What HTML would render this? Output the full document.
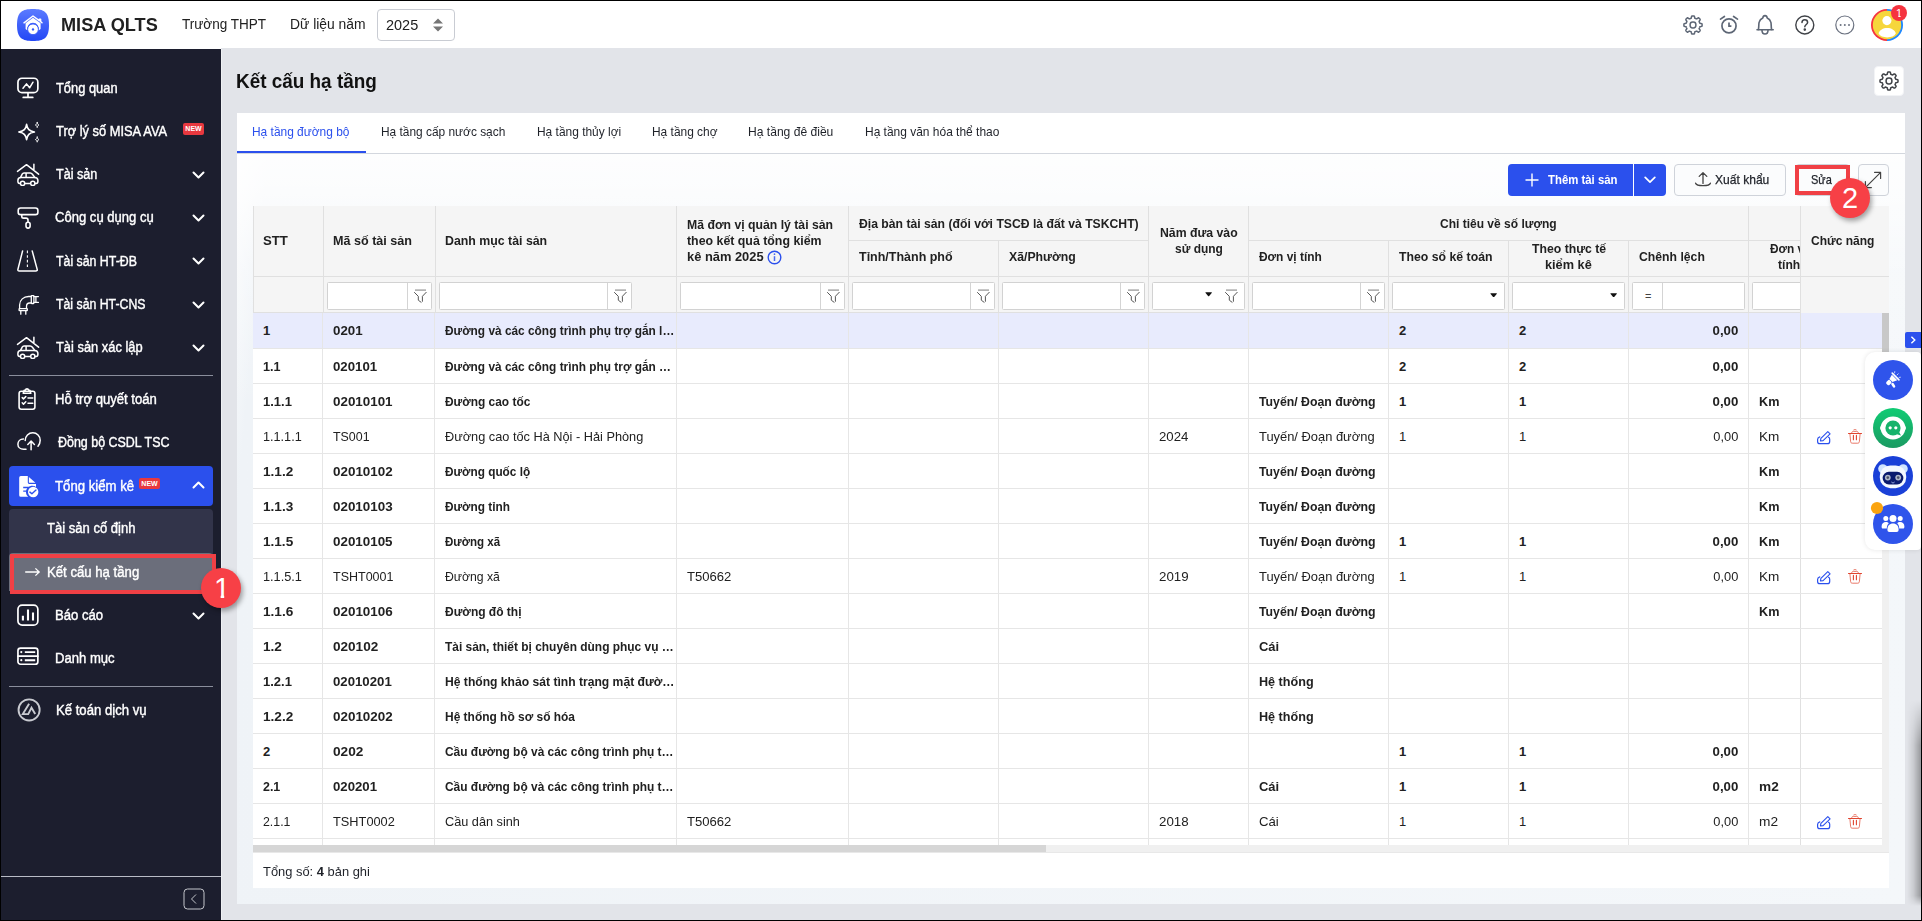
<!DOCTYPE html>
<html lang="vi">
<head>
<meta charset="utf-8">
<title>Kết cấu hạ tầng</title>
<style>
*{box-sizing:border-box;margin:0;padding:0}
html,body{width:1922px;height:921px;overflow:hidden;background:#000}
body{font-family:"Liberation Sans",sans-serif;font-size:13px;color:#212121;position:relative}
.a{position:absolute}
.x{position:absolute;white-space:nowrap;transform-origin:0 50%}
.s14{font-size:14px;line-height:20px;color:#fff;-webkit-text-stroke:0.4px #fff}
.h14{font-size:14px;line-height:20px;color:#212121}
.tab{font-size:13px;line-height:18px;color:#1f2229}
.th{font-weight:bold;font-size:13px;line-height:16px;color:#212121}
.td{font-size:13px;line-height:17px;color:#212121}
.tb{font-size:13px;line-height:17px;color:#212121;font-weight:bold}
.new{position:absolute;background:#e8383f;color:#fff;font-size:7px;font-weight:bold;border-radius:2px;text-align:center}
.mi{position:absolute;left:9px;width:204px;height:40px;border-radius:4px}
.btnp{position:absolute;background:#2b50ed}
.btns{position:absolute;background:#fbfcfd;border:1px solid #cfd3da;border-radius:4px}
.fi{position:absolute;background:#fff;border:1px solid #d2d2d2;border-radius:1.5px}
</style>
</head>
<body>
<div class="a" style="left:1px;top:1px;width:1920px;height:919px;background:#e2e4e9;"></div>
<header>
<div class="a" style="left:1px;top:1px;width:1920px;height:47px;background:#fff;"></div>
<div class="a" style="left:1px;top:48px;width:220px;height:1px;background:#fff;"></div>
<svg class="a" style="left:17px;top:9px;width:32px;height:32px" viewBox="0 0 32 32">
<defs><linearGradient id="lg" x1="0" y1="0" x2="0" y2="1"><stop offset="0" stop-color="#5b7bff"/><stop offset="1" stop-color="#2347f5"/></linearGradient></defs>
<path d="M16 0C27 0 32 3 32 16C32 29 27 32 16 32C5 32 0 29 0 16C0 3 5 0 16 0Z" fill="url(#lg)"/>
<path d="M7 13.8L16 7L22.3 11.6V10.2H23.6V12.6L25 13.8" fill="none" stroke="#fff" stroke-width="1.5" stroke-linejoin="round" stroke-linecap="round"/>
<path d="M8.6 14.2L16 8.8L23.6 14.2V20L21.5 21.5A5.8 5.8 0 1 0 10.5 21.5L8.6 20Z" fill="#fff"/>
<circle cx="16" cy="20.3" r="5.4" fill="#fff" stroke="#3d5ffa" stroke-width="1"/>
<path d="M16 18.7L17.4 20.4L16 22.1L14.6 20.4Z" fill="#3558f8"/>
</svg>

<div class="x " id="brand" style="left:60.56px;top:13px;transform:scaleX(1.0079);font-size:18px;font-weight:bold;color:#212121;line-height:24px">MISA QLTS</div>
<div class="x h14" id="h_truong" style="left:181.69px;top:14px;transform:scaleX(0.9670);">Trường THPT</div>
<div class="x h14" id="h_dulieu" style="left:289.79px;top:14px;transform:scaleX(0.9908);">Dữ liệu năm</div>
<div class="a" style="left:377px;top:9px;width:78px;height:32px;border:1px solid #c9ccd3;border-radius:4px;background:#fff"></div>
<div class="x h14" id="h_year" style="left:385.68px;top:15px;transform:scaleX(1.0340);">2025</div>
<svg class="a" style="left:432px;top:17px;width:12px;height:16px" viewBox="0 0 12 16" ><path d="M1 6.4L6 1.4L11 6.4Z M1 9.6L6 14.6L11 9.6Z" fill="#757575"/></svg>
<svg class="a" style="left:1681px;top:13px;width:24px;height:24px" viewBox="0 0 24 24" fill="none" stroke="#5d6675" stroke-width="1.5" stroke-linejoin="round"><path d="M21.10 12.00L21.09 12.36L21.07 12.71L21.04 13.07L20.71 13.38L19.90 13.57L19.08 13.70L18.74 13.90L18.66 14.16L18.57 14.42L18.47 14.68L18.36 14.93L18.24 15.18L18.11 15.42L18.21 15.80L18.69 16.47L19.14 17.19L19.15 17.63L18.92 17.91L18.68 18.18L18.43 18.43L18.18 18.68L17.91 18.92L17.63 19.15L17.19 19.14L16.47 18.69L15.80 18.21L15.42 18.11L15.18 18.24L14.93 18.36L14.68 18.47L14.42 18.57L14.16 18.66L13.90 18.74L13.70 19.08L13.57 19.90L13.38 20.71L13.07 21.04L12.71 21.07L12.36 21.09L12.00 21.10L11.64 21.09L11.29 21.07L10.93 21.04L10.62 20.71L10.43 19.90L10.30 19.08L10.10 18.74L9.84 18.66L9.58 18.57L9.32 18.47L9.07 18.36L8.82 18.24L8.58 18.11L8.20 18.21L7.53 18.69L6.81 19.14L6.37 19.15L6.09 18.92L5.82 18.68L5.57 18.43L5.32 18.18L5.08 17.91L4.85 17.63L4.86 17.19L5.31 16.47L5.79 15.80L5.89 15.42L5.76 15.18L5.64 14.93L5.53 14.68L5.43 14.42L5.34 14.16L5.26 13.90L4.92 13.70L4.10 13.57L3.29 13.38L2.96 13.07L2.93 12.71L2.91 12.36L2.90 12.00L2.91 11.64L2.93 11.29L2.96 10.93L3.29 10.62L4.10 10.43L4.92 10.30L5.26 10.10L5.34 9.84L5.43 9.58L5.53 9.32L5.64 9.07L5.76 8.82L5.89 8.58L5.79 8.20L5.31 7.53L4.86 6.81L4.85 6.37L5.08 6.09L5.32 5.82L5.57 5.57L5.82 5.32L6.09 5.08L6.37 4.85L6.81 4.86L7.53 5.31L8.20 5.79L8.58 5.89L8.82 5.76L9.07 5.64L9.32 5.53L9.58 5.43L9.84 5.34L10.10 5.26L10.30 4.92L10.43 4.10L10.62 3.29L10.93 2.96L11.29 2.93L11.64 2.91L12.00 2.90L12.36 2.91L12.71 2.93L13.07 2.96L13.38 3.29L13.57 4.10L13.70 4.92L13.90 5.26L14.16 5.34L14.42 5.43L14.68 5.53L14.93 5.64L15.18 5.76L15.42 5.89L15.80 5.79L16.47 5.31L17.19 4.86L17.63 4.85L17.91 5.08L18.18 5.32L18.43 5.57L18.68 5.82L18.92 6.09L19.15 6.37L19.14 6.81L18.69 7.53L18.21 8.20L18.11 8.58L18.24 8.82L18.36 9.07L18.47 9.32L18.57 9.58L18.66 9.84L18.74 10.10L19.08 10.30L19.90 10.43L20.71 10.62L21.04 10.93L21.07 11.29L21.09 11.64Z"/><rect x="9.1" y="9.1" width="5.8" height="5.8" rx="2.6"/></svg>
<svg class="a" style="left:1717px;top:13px;width:24px;height:24px" viewBox="0 0 24 24" fill="none" stroke="#5d6675" stroke-width="1.7" stroke-linecap="round" stroke-linejoin="round"><circle cx="12" cy="12.9" r="7.05"/><path d="M12 9.5V13.2H14.4" stroke-linecap="butt" stroke-linejoin="miter"/><path d="M3.5 6.1L7.4 3.5M16.6 3.5L20.5 6.1"/></svg>
<svg class="a" style="left:1753px;top:13px;width:24px;height:24px" viewBox="0 0 24 24" fill="none" stroke="#5d6675" stroke-width="1.6" stroke-linecap="round" stroke-linejoin="round"><path d="M4 16.7H20.2"/><path d="M5.4 16.5C6.1 13.4 5.5 11 6.2 9C6.8 7 8 5.8 9.8 5C10 3.4 10.8 2.6 12 2.6C13.2 2.6 14 3.4 14.2 5C16 5.8 17.2 7 17.8 9C18.5 11 17.9 13.4 18.6 16.5"/><path d="M9 17.2C9 19.7 10 21 12 21C14 21 15 19.7 15 17.2"/></svg>
<svg class="a" style="left:1793px;top:13px;width:24px;height:24px" viewBox="0 0 24 24" fill="none" stroke="#3f4247" stroke-width="1.4" stroke-linecap="round" stroke-linejoin="round"><circle cx="11.8" cy="12" r="9"/><path d="M9 9.6C9 7.8 10.2 6.8 11.8 6.8C13.4 6.8 14.6 7.8 14.6 9.4C14.6 11.4 11.8 11.6 11.8 13.8" stroke-width="1.5"/><circle cx="11.8" cy="16.6" r="0.6" fill="#3f4247"/></svg>
<svg class="a" style="left:1833px;top:13px;width:24px;height:24px" viewBox="0 0 24 24" fill="none" stroke="#6b7280" stroke-width="1.2"><circle cx="11.8" cy="12" r="9"/><g fill="#6b7280" stroke="none"><circle cx="7.6" cy="12" r="1"/><circle cx="11.8" cy="12" r="1"/><circle cx="16" cy="12" r="1"/></g></svg>
<svg class="a" style="left:1871px;top:4px;width:40px;height:40px" viewBox="0 0 40 40"><defs><clipPath id="avc"><path d="M0 0H40V12.05H29.7V14H27.2V12.05H0Z"/></clipPath></defs>
<path d="M16 5A16 16 0 0 0 16 37Z" fill="#f5333f"/><path d="M16 5A16 16 0 0 1 16 37Z" fill="#1e88ff"/>
<circle cx="16" cy="21" r="14.2" fill="#f6d63c"/>
<g fill="#fff"><circle cx="15.9" cy="16.6" r="4.55"/><path d="M7.6 29.6C8.6 26 12 24.1 16.2 24.1C20.4 24.1 23.8 26 24.8 29.6C23.4 32.2 20.2 33.4 16.2 33.4C12.2 33.4 9 32.2 7.6 29.6Z"/></g>
<circle cx="28" cy="9" r="8" fill="#f5333f"/>
<text x="28" y="13" font-family="Liberation Sans, sans-serif" font-size="11" fill="#fff" text-anchor="middle" clip-path="url(#avc)">1</text>
</svg>

</header>
<nav>
<div class="a" style="left:1px;top:49px;width:220px;height:871px;background:#1c1e2e;"></div>
<div class="a" style="left:221px;top:49px;width:1px;height:871px;background:#eef0f3;"></div>
<div class="a" style="left:9px;top:466px;width:204px;height:40px;background:#2b50ed;border-radius:4px"></div>
<div class="a" style="left:9px;top:509px;width:204px;height:82px;background:#32344a;border-radius:4px"></div>
<div class="a" style="left:9px;top:553px;width:204px;height:38px;background:#6b6e7b;border-radius:4px 4px 0 0"></div>
<svg class="a" style="left:16px;top:76px;width:24px;height:24px" viewBox="0 0 24 24" fill="none" stroke="#fff" stroke-linecap="round" stroke-linejoin="round" stroke-width="1.7"><rect x="1.95" y="2.25" width="19.9" height="14.4" rx="4"/><path d="M12 16.8V21.2M7.2 21.4H16.8"/><path d="M7 12.3L10.5 7.9L13.6 11.8L17 6.2" stroke-width="1.5"/></svg>
<svg class="a" style="left:16px;top:119px;width:24px;height:24px" viewBox="0 0 24 24" fill="none" stroke="#fff" stroke-linecap="round" stroke-linejoin="round" stroke-width="1.6"><path d="M10.6 5.3C11.4 10.2 13.2 12.1 18.4 13C13.2 13.9 11.4 15.8 10.6 20.7C9.8 15.8 8 13.9 2.8 13C8 12.1 9.8 10.2 10.6 5.3Z"/><path d="M21.2 3.4C21.5 5 21.9 5.6 23 6C21.9 6.4 21.5 7 21.2 8.6C20.9 7 20.5 6.4 19.4 6C20.5 5.6 20.9 5 21.2 3.4Z" stroke-width="0.9"/><path d="M21.2 18C21.5 19.6 21.9 20.2 23 20.6C21.9 21 21.5 21.6 21.2 23.2C20.9 21.6 20.5 21 19.4 20.6C20.5 20.2 20.9 19.6 21.2 18Z" stroke-width="0.9"/></svg>
<svg class="a" style="left:16px;top:162px;width:24px;height:24px" viewBox="0 0 24 24" fill="none" stroke="#fff" stroke-linecap="round" stroke-linejoin="round" stroke-width="1.5"><path d="M1.5 9.4L10.5 2.7L22.6 12.2M17.9 2.2V8.6"/><path d="M4.6 15.4L6.2 12.2C6.6 11.4 7.2 11 8 11H14.2C15.2 11 15.8 11.4 16.4 12.2L18.8 15.4M10.1 11.2V15.2"/><path d="M4.2 21.4H3.6C2.6 21.4 1.9 20.7 1.9 19.6V18.4C1.9 16.6 3 15.5 4.8 15.5H18.6C20.6 15.5 21.9 16.8 21.9 18.6V19.6C21.9 20.7 21.2 21.4 20.2 21.4H19.2M9 21.4H14.4"/><circle cx="6.6" cy="21.4" r="2.1"/><circle cx="16.8" cy="21.4" r="2.1"/></svg>
<svg class="a" style="left:16px;top:205px;width:24px;height:24px" viewBox="0 0 24 24" fill="none" stroke="#fff" stroke-linecap="round" stroke-linejoin="round" stroke-width="1.6"><rect x="2.2" y="3" width="19.7" height="6.6" rx="2.4"/><path d="M5.8 9.8V11.4C5.8 12.6 6.4 13.1 7.6 13.1H10C11.4 13.1 12 13.7 12 15V17"/><rect x="10" y="17.3" width="4.1" height="5.8" rx="2"/></svg>
<svg class="a" style="left:16px;top:248px;width:24px;height:24px" viewBox="0 0 24 24" fill="none" stroke="#fff" stroke-linecap="round" stroke-linejoin="round" stroke-width="1.5"><path d="M6.6 2.9L1.9 21.4Q1.6 23 3.2 23H19.8Q21.6 23 21.2 21.4L16.2 2.9"/><path d="M11.4 2.6V21" stroke-dasharray="2.6 2" stroke-width="1.1" stroke-linecap="butt"/></svg>
<svg class="a" style="left:16px;top:292px;width:24px;height:24px" viewBox="0 0 24 24" fill="none" stroke="#fff" stroke-linecap="round" stroke-linejoin="round" stroke-width="1.3"><path d="M3.6 16.6V13C3.6 8 7.6 4.5 12.6 4.5H15.2M10.5 16.6V14.4C10.5 12.2 11.6 11 13.6 11H15.2"/><rect x="15.3" y="3.7" width="2.6" height="7.8" rx="0.4"/><path d="M17.9 4.6H22.4M17.9 10.4H22.4M19.9 4.6V10.4"/><rect x="3.1" y="16.7" width="8.2" height="1.9" rx="0.4"/><path d="M4.8 18.6V22.2M9.8 18.6V22.2"/></svg>
<svg class="a" style="left:16px;top:335px;width:24px;height:24px" viewBox="0 0 24 24" fill="none" stroke="#fff" stroke-linecap="round" stroke-linejoin="round" stroke-width="1.5"><path d="M1.5 9.4L10.5 2.7L22.6 12.2M17.9 2.2V8.6"/><path d="M4.6 15.4L6.2 12.2C6.6 11.4 7.2 11 8 11H14.2C15.2 11 15.8 11.4 16.4 12.2L18.8 15.4M10.1 11.2V15.2"/><path d="M4.2 21.4H3.6C2.6 21.4 1.9 20.7 1.9 19.6V18.4C1.9 16.6 3 15.5 4.8 15.5H18.6C20.6 15.5 21.9 16.8 21.9 18.6V19.6C21.9 20.7 21.2 21.4 20.2 21.4H19.2M9 21.4H14.4"/><circle cx="6.6" cy="21.4" r="2.1"/><circle cx="16.8" cy="21.4" r="2.1"/></svg>
<svg class="a" style="left:16px;top:387px;width:24px;height:24px" viewBox="0 0 24 24" fill="none" stroke="#fff" stroke-linecap="round" stroke-linejoin="round" stroke-width="1.6"><rect x="3.1" y="4.2" width="15.8" height="18" rx="2.2"/><path d="M7.2 6.2L8.2 3.2H9.4C9.8 1.4 12.2 1.4 12.6 3.2H13.8L14.8 6.2Z"/><path d="M6.2 10.6L7.5 11.9L9.8 9.6M12 11H16.8M6.2 15.8L7.5 17.1L9.8 14.8M12 16.2H16.8" stroke-width="1.5"/></svg>
<svg class="a" style="left:16px;top:430px;width:27px;height:24px" viewBox="0 0 27 24" fill="none" stroke="#fff" stroke-linecap="round" stroke-linejoin="round" stroke-width="1.5"><path d="M10 19.3H7.6C4.2 19.3 1.9 17 1.9 14.2C1.9 11.2 4.2 9 7.4 9"/><path d="M9.2 10.6C9.2 6 12.6 2.8 16.8 2.8C21 2.8 24.2 6.2 24.2 10.2C24.2 12.8 23.4 14.6 22 16.2"/><path d="M15.1 19.8V11.2M11.8 14.5L15.1 11.1L18.4 14.5"/></svg>
<svg class="a" style="left:16px;top:474px;width:24px;height:24px" viewBox="0 0 24 24"><path d="M4.8 2.1H11.8V8.6Q11.8 10 13.2 10H20V13.2A5.8 5.8 0 0 0 12.2 22.8H4.8Q3.2 22.8 3.2 21.2V3.7Q3.2 2.1 4.8 2.1Z" fill="#fff"/><path d="M12.9 3.1L19.4 8.7H12.9Z" fill="#fff"/><path d="M7.2 13.5H12.7M7.2 17.2H11.4" stroke="#2b50ed" stroke-width="1.3"/><circle cx="17.2" cy="18.05" r="5.9" fill="#2b50ed"/><circle cx="17.2" cy="18.05" r="5.2" fill="#fff"/><path d="M13.9 18.1L15.9 19.8L20 16.1" fill="none" stroke="#2b50ed" stroke-width="1.4" stroke-linecap="round" stroke-linejoin="round"/></svg>
<svg class="a" style="left:16px;top:603px;width:24px;height:24px" viewBox="0 0 24 24" fill="none" stroke="#fff" stroke-linecap="round" stroke-linejoin="round" stroke-width="1.7"><rect x="1.95" y="2.15" width="19.9" height="20" rx="4.2"/><path d="M6.9 12.8V17.4M12 6.4V17.4M17 9.5V17.4" stroke-width="2.1" stroke-linecap="butt"/></svg>
<svg class="a" style="left:16px;top:646px;width:24px;height:24px" viewBox="0 0 24 24" fill="none" stroke="#fff" stroke-linecap="round" stroke-linejoin="round" stroke-width="1.7"><rect x="1.95" y="2.15" width="19.9" height="16.1" rx="2.6"/><path d="M2 10.2H21.8"/><path d="M8.8 6.1H19.2M8.8 14.2H19.2" stroke-width="1.9" stroke-linecap="butt"/><circle cx="5.3" cy="6.1" r="1.1" fill="#fff" stroke="none"/><circle cx="5.3" cy="14.2" r="1.1" fill="#fff" stroke="none"/></svg>
<svg class="a" style="left:17px;top:697px;width:25px;height:25px" viewBox="0 0 25 25" fill="none" stroke="#c8cad0"><circle cx="12.1" cy="12.9" r="10.55" stroke-width="1.9"/><path d="M12.1 6.7L5.8 17.1H11.2L14.5 10.8L18.2 17.1" stroke-width="1.9" stroke-linejoin="miter"/></svg>
<div class="x s14" id="m1" style="left:55.54px;top:78px;transform:scaleX(0.9194);">Tổng quan</div>
<div class="x s14" id="m2" style="left:55.54px;top:121px;transform:scaleX(0.9194);">Trợ lý số MISA AVA</div>
<div class="x s14" id="m3" style="left:55.53px;top:164px;transform:scaleX(0.8994);">Tài sản</div>
<svg class="a" style="left:192px;top:170.5px;width:13px;height:8px" viewBox="0 0 13 8" ><path d="M1.5 1.5L6.5 6.5L11.5 1.5" fill="none" stroke="#fff" stroke-width="2" stroke-linecap="round" stroke-linejoin="round"/></svg>
<div class="x s14" id="m4" style="left:54.59px;top:207px;transform:scaleX(0.9328);">Công cụ dụng cụ</div>
<svg class="a" style="left:192px;top:213.5px;width:13px;height:8px" viewBox="0 0 13 8" ><path d="M1.5 1.5L6.5 6.5L11.5 1.5" fill="none" stroke="#fff" stroke-width="2" stroke-linecap="round" stroke-linejoin="round"/></svg>
<div class="x s14" id="m5" style="left:55.68px;top:250.5px;transform:scaleX(0.8810);">Tài sản HT-ĐB</div>
<svg class="a" style="left:192px;top:257.0px;width:13px;height:8px" viewBox="0 0 13 8" ><path d="M1.5 1.5L6.5 6.5L11.5 1.5" fill="none" stroke="#fff" stroke-width="2" stroke-linecap="round" stroke-linejoin="round"/></svg>
<div class="x s14" id="m6" style="left:55.68px;top:294px;transform:scaleX(0.8782);">Tài sản HT-CNS</div>
<svg class="a" style="left:192px;top:300.5px;width:13px;height:8px" viewBox="0 0 13 8" ><path d="M1.5 1.5L6.5 6.5L11.5 1.5" fill="none" stroke="#fff" stroke-width="2" stroke-linecap="round" stroke-linejoin="round"/></svg>
<div class="x s14" id="m7" style="left:55.70px;top:337px;transform:scaleX(0.9194);">Tài sản xác lập</div>
<svg class="a" style="left:192px;top:343.5px;width:13px;height:8px" viewBox="0 0 13 8" ><path d="M1.5 1.5L6.5 6.5L11.5 1.5" fill="none" stroke="#fff" stroke-width="2" stroke-linecap="round" stroke-linejoin="round"/></svg>
<div class="x s14" id="m8" style="left:54.59px;top:389px;transform:scaleX(0.9361);">Hỗ trợ quyết toán</div>
<div class="x s14" id="m9" style="left:57.71px;top:432px;transform:scaleX(0.8896);">Đồng bộ CSDL TSC</div>
<div class="x s14" id="m10" style="left:54.70px;top:475.5px;transform:scaleX(0.9415);">Tổng kiểm kê</div>
<svg class="a" style="left:192px;top:481.0px;width:13px;height:8px" viewBox="0 0 13 8" ><path d="M1.5 6.5L6.5 1.5L11.5 6.5" fill="none" stroke="#fff" stroke-width="2" stroke-linecap="round" stroke-linejoin="round"/></svg>
<div class="x s14" id="m13" style="left:54.66px;top:605px;transform:scaleX(0.9375);">Báo cáo</div>
<svg class="a" style="left:192px;top:611.5px;width:13px;height:8px" viewBox="0 0 13 8" ><path d="M1.5 1.5L6.5 6.5L11.5 1.5" fill="none" stroke="#fff" stroke-width="2" stroke-linecap="round" stroke-linejoin="round"/></svg>
<div class="x s14" id="m14" style="left:54.66px;top:648px;transform:scaleX(0.9345);">Danh mục</div>
<div class="x s14" id="m15" style="left:55.71px;top:700px;transform:scaleX(0.9386);">Kế toán dịch vụ</div>
<div class="x s14" id="m11" style="left:46.67px;top:518px;transform:scaleX(0.9321);">Tài sản cố định</div>
<div class="x s14" id="m12" style="left:46.55px;top:562px;transform:scaleX(0.9401);">Kết cấu hạ tầng</div>
<svg class="a" style="left:24px;top:566px;width:17px;height:12px" viewBox="0 0 17 12" ><path d="M1.2 6H15M11.4 2.4L15.2 6L11.4 9.6" fill="none" stroke="#fff" stroke-width="1.3"/></svg>
<div class="new" style="left:183px;top:123px;width:21px;height:12px;line-height:12px">NEW</div>
<div class="new" style="left:139px;top:478px;width:21px;height:11px;line-height:11px">NEW</div>
<div class="a" style="left:9px;top:375px;width:204px;height:1px;background:#8a8e9c;"></div>
<div class="a" style="left:9px;top:686px;width:204px;height:1px;background:#8a8e9c;"></div>
<div class="a" style="left:1px;top:876px;width:220px;height:1px;background:#b9bcc6;"></div>
<svg class="a" style="left:183px;top:888px;width:22px;height:22px" viewBox="0 0 22 22" fill="none" stroke="#c4c6cc" stroke-width="1"><rect x="1" y="1" width="20" height="20" rx="3.5"/><path d="M13 6.5L8.5 11L13 15.5"/></svg>
</nav>
<main>
<div class="x " id="title" style="left:235.50px;top:67px;transform:scaleX(0.9456);font-size:20px;font-weight:bold;line-height:28px;color:#111">Kết cấu hạ tầng</div>
<div class="a" style="left:1874px;top:66px;width:30px;height:30px;background:#fff;border:1px solid #f2f3f6;border-radius:4px"></div>
<svg class="a" style="left:1877px;top:69px;width:24px;height:24px" viewBox="0 0 24 24" fill="none" stroke="#3f4247" stroke-width="1.5" stroke-linejoin="round"><path d="M21.00 12.00L20.99 12.35L20.97 12.71L20.94 13.06L20.61 13.36L19.80 13.55L18.98 13.68L18.64 13.87L18.56 14.13L18.47 14.39L18.37 14.64L18.27 14.89L18.15 15.13L18.02 15.37L18.12 15.75L18.61 16.42L19.06 17.13L19.07 17.57L18.84 17.85L18.61 18.11L18.36 18.36L18.11 18.61L17.85 18.84L17.57 19.07L17.13 19.06L16.42 18.61L15.75 18.12L15.37 18.02L15.13 18.15L14.89 18.27L14.64 18.37L14.39 18.47L14.13 18.56L13.87 18.64L13.68 18.98L13.55 19.80L13.36 20.61L13.06 20.94L12.71 20.97L12.35 20.99L12.00 21.00L11.65 20.99L11.29 20.97L10.94 20.94L10.64 20.61L10.45 19.80L10.32 18.98L10.13 18.64L9.87 18.56L9.61 18.47L9.36 18.37L9.11 18.27L8.87 18.15L8.63 18.02L8.25 18.12L7.58 18.61L6.87 19.06L6.43 19.07L6.15 18.84L5.89 18.61L5.64 18.36L5.39 18.11L5.16 17.85L4.93 17.57L4.94 17.13L5.39 16.42L5.88 15.75L5.98 15.37L5.85 15.13L5.73 14.89L5.63 14.64L5.53 14.39L5.44 14.13L5.36 13.87L5.02 13.68L4.20 13.55L3.39 13.36L3.06 13.06L3.03 12.71L3.01 12.35L3.00 12.00L3.01 11.65L3.03 11.29L3.06 10.94L3.39 10.64L4.20 10.45L5.02 10.32L5.36 10.13L5.44 9.87L5.53 9.61L5.63 9.36L5.73 9.11L5.85 8.87L5.98 8.63L5.88 8.25L5.39 7.58L4.94 6.87L4.93 6.43L5.16 6.15L5.39 5.89L5.64 5.64L5.89 5.39L6.15 5.16L6.43 4.93L6.87 4.94L7.58 5.39L8.25 5.88L8.63 5.98L8.87 5.85L9.11 5.73L9.36 5.63L9.61 5.53L9.87 5.44L10.13 5.36L10.32 5.02L10.45 4.20L10.64 3.39L10.94 3.06L11.29 3.03L11.65 3.01L12.00 3.00L12.35 3.01L12.71 3.03L13.06 3.06L13.36 3.39L13.55 4.20L13.68 5.02L13.87 5.36L14.13 5.44L14.39 5.53L14.64 5.63L14.89 5.73L15.13 5.85L15.37 5.98L15.75 5.88L16.42 5.39L17.13 4.94L17.57 4.93L17.85 5.16L18.11 5.39L18.36 5.64L18.61 5.89L18.84 6.15L19.07 6.43L19.06 6.87L18.61 7.58L18.12 8.25L18.02 8.63L18.15 8.87L18.27 9.11L18.37 9.36L18.47 9.61L18.56 9.87L18.64 10.13L18.98 10.32L19.80 10.45L20.61 10.64L20.94 10.94L20.97 11.29L20.99 11.65Z"/><rect x="9.1" y="9.1" width="5.8" height="5.8" rx="2.6"/></svg>

<div class="a" style="left:237px;top:113px;width:1668px;height:791px;background:linear-gradient(180deg,rgba(255,255,255,1) 0%,rgba(255,255,255,0.8) 9%,rgba(255,255,255,0.3) 20%,rgba(255,255,255,0) 38%),linear-gradient(95deg,#fbfcfd 0%,#eff3f7 2%,#f4f7fa 100%)"></div>
<div class="a" style="left:237px;top:113px;width:1668px;height:40px;background:#fff;"></div>
<div class="a" style="left:237px;top:153px;width:1668px;height:1px;background:#d3d7de;"></div>
<div class="a" style="left:237px;top:151px;width:129px;height:2px;background:#2b50ed;"></div>
<div class="x tab" id="tab1" style="left:251.62px;top:123px;transform:scaleX(0.9180);color:#2b50ed">Hạ tầng đường bộ</div>
<div class="x tab" id="tab2" style="left:380.67px;top:123px;transform:scaleX(0.9157);">Hạ tầng cấp nước sạch</div>
<div class="x tab" id="tab3" style="left:536.56px;top:123px;transform:scaleX(0.9187);">Hạ tầng thủy lợi</div>
<div class="x tab" id="tab4" style="left:651.57px;top:123px;transform:scaleX(0.9180);">Hạ tầng chợ</div>
<div class="x tab" id="tab5" style="left:747.89px;top:123px;transform:scaleX(0.9297);">Hạ tầng đê điều</div>
<div class="x tab" id="tab6" style="left:864.60px;top:123px;transform:scaleX(0.9201);">Hạ tầng văn hóa thể thao</div>
<div class="btnp" style="left:1508px;top:164px;width:125px;height:32px;border-radius:4px 0 0 4px"></div>
<div class="btnp" style="left:1634px;top:164px;width:32px;height:32px;border-radius:0 4px 4px 0"></div>
<svg class="a" style="left:1525px;top:173px;width:14px;height:14px" viewBox="0 0 14 14" ><path d="M7 0.5V13.5M0.5 7H13.5" stroke="#fff" stroke-width="1.4" fill="none"/></svg>
<div class="x " id="b_them" style="left:1547.60px;top:171px;transform:scaleX(0.8740);font-weight:bold;font-size:13px;line-height:18px;color:#fff">Thêm tài sản</div>
<svg class="a" style="left:1644px;top:175px;width:12px;height:10px" viewBox="0 0 12 10" ><path d="M1.2 2.4L6 7.2L10.8 2.4" fill="none" stroke="#fff" stroke-width="1.7" stroke-linecap="round" stroke-linejoin="round"/></svg>
<div class="btns" style="left:1674px;top:164px;width:112px;height:32px"></div>
<svg class="a" style="left:1694px;top:171px;width:18px;height:18px" viewBox="0 0 18 18" fill="none" stroke="#444" stroke-width="1.3" stroke-linecap="round" stroke-linejoin="round"><path d="M9 12.4V1.8M5.2 5.4L9 1.6L12.8 5.4M1.6 12.2C2.6 15.4 15.4 15.4 16.4 12.2"/></svg>
<div class="x " id="b_xuat" style="left:1714.68px;top:171px;transform:scaleX(0.9281);font-size:13px;line-height:18px;color:#1f2229;-webkit-text-stroke:0.25px #1f2229">Xuất khẩu</div>
<div class="btns" style="left:1795px;top:164px;width:55px;height:32px"></div>
<div class="x " id="b_sua" style="left:1810.70px;top:171px;transform:scaleX(0.8455);font-size:13px;line-height:18px;color:#1f2229;-webkit-text-stroke:0.25px #1f2229">Sửa</div>
<div class="btns" style="left:1858px;top:164px;width:31px;height:32px"></div>
<svg class="a" style="left:1863px;top:170px;width:20px;height:20px" viewBox="0 0 20 20" fill="none" stroke="#444" stroke-width="1.2" stroke-linecap="round" stroke-linejoin="round"><path d="M2.6 17.4L17.4 2.6M11.6 2.4H17.6V8.4M2.4 11.6V17.6H8.4"/></svg>
<div class="a" style="left:253px;top:206px;width:1636px;height:682px;background:#fff;"></div>
<div class="a" style="left:253px;top:206px;width:1636px;height:107px;background:#f5f5f5;"></div>
<div class="a" style="left:848px;top:240px;width:300px;height:1px;background:#e0e0e0;"></div>
<div class="a" style="left:1248px;top:240px;width:552px;height:1px;background:#e0e0e0;"></div>
<div class="a" style="left:253px;top:276px;width:1547px;height:1px;background:#e0e0e0;"></div>
<div class="a" style="left:253px;top:312px;width:1547px;height:1px;background:#e0e0e0;"></div>
<div class="a" style="left:253px;top:206px;width:1px;height:106px;background:#e0e0e0;"></div>
<div class="a" style="left:323px;top:206px;width:1px;height:106px;background:#e0e0e0;"></div>
<div class="a" style="left:435px;top:206px;width:1px;height:106px;background:#e0e0e0;"></div>
<div class="a" style="left:676px;top:206px;width:1px;height:106px;background:#e0e0e0;"></div>
<div class="a" style="left:848px;top:206px;width:1px;height:106px;background:#e0e0e0;"></div>
<div class="a" style="left:1148px;top:206px;width:1px;height:106px;background:#e0e0e0;"></div>
<div class="a" style="left:1248px;top:206px;width:1px;height:106px;background:#e0e0e0;"></div>
<div class="a" style="left:1748px;top:206px;width:1px;height:106px;background:#e0e0e0;"></div>
<div class="a" style="left:998px;top:241px;width:1px;height:71px;background:#e0e0e0;"></div>
<div class="a" style="left:1388px;top:241px;width:1px;height:71px;background:#e0e0e0;"></div>
<div class="a" style="left:1508px;top:241px;width:1px;height:71px;background:#e0e0e0;"></div>
<div class="a" style="left:1628px;top:241px;width:1px;height:71px;background:#e0e0e0;"></div>
<div class="x th" id="th_stt" style="left:262.60px;top:233px;transform:scaleX(1.0149);">STT</div>
<div class="x th" id="th_ma" style="left:332.72px;top:233px;transform:scaleX(0.9673);">Mã số tài sản</div>
<div class="x th" id="th_dm" style="left:444.68px;top:233px;transform:scaleX(0.9489);">Danh mục tài sản</div>
<div class="x th" id="th_dv1" style="left:686.67px;top:217px;transform:scaleX(0.9414);">Mã đơn vị quản lý tài sản</div>
<div class="x th" id="th_dv2" style="left:686.82px;top:233px;transform:scaleX(0.9504);">theo kết quả tổng kiểm</div>
<div class="x th" id="th_dv3" style="left:686.60px;top:249px;transform:scaleX(0.9900);">kê năm 2025</div>
<div class="x th" id="th_db" style="left:858.70px;top:216px;transform:scaleX(0.9379);">Địa bàn tài sản (đối với TSCĐ là đất và TSKCHT)</div>
<div class="x th" id="th_tinh" style="left:858.79px;top:248.5px;transform:scaleX(0.9605);">Tỉnh/Thành phố</div>
<div class="x th" id="th_xa" style="left:1008.73px;top:248.5px;transform:scaleX(0.9435);">Xã/Phường</div>
<div class="x th" id="th_nam1" style="left:1159.68px;top:224.5px;transform:scaleX(0.9421);">Năm đưa vào</div>
<div class="x th" id="th_nam2" style="left:1174.65px;top:240.5px;transform:scaleX(0.9209);">sử dụng</div>
<div class="x th" id="th_ct" style="left:1439.71px;top:216px;transform:scaleX(0.9239);">Chỉ tiêu về số lượng</div>
<div class="x th" id="th_dvt" style="left:1258.79px;top:248.5px;transform:scaleX(0.9181);">Đơn vị tính</div>
<div class="x th" id="th_so" style="left:1398.52px;top:248.5px;transform:scaleX(0.9444);">Theo sổ kế toán</div>
<div class="x th" id="th_tt1" style="left:1531.79px;top:240.5px;transform:scaleX(0.9416);">Theo thực tế</div>
<div class="x th" id="th_tt2" style="left:1544.59px;top:256.5px;transform:scaleX(0.9796);">kiểm kê</div>
<div class="x th" id="th_cl" style="left:1638.76px;top:248.5px;transform:scaleX(0.9398);">Chênh lệch</div>
<div class="x th" id="th_dvx1" style="left:1769.90px;top:240.5px;transform:scaleX(0.9100);">Đơn vị</div>
<div class="x th" id="th_dvx2" style="left:1777.50px;top:256.5px;transform:scaleX(0.9300);">tính</div>
<svg class="a" style="left:766.5px;top:249.5px;width:15px;height:15px" viewBox="0 0 15 15" ><circle cx="7.5" cy="7.5" r="6.3" fill="none" stroke="#2b50ed" stroke-width="1.4"/><path d="M7.5 6.2V11" stroke="#4a69f0" stroke-width="1.5"/><circle cx="7.5" cy="4.2" r="0.85" fill="#4a69f0"/></svg>
<div class="fi" style="left:327px;top:282px;width:105px;height:28px"></div>
<div class="a" style="left:407px;top:283px;width:1px;height:26px;background:#d4d4d4;"></div>
<svg class="a" style="left:413.6px;top:289px;width:15px;height:15px" viewBox="0 0 15 15" ><path d="M1 1.1H12" fill="none" stroke="#9a9a9a" stroke-width="1.3"/><path d="M0.2 3.2L4.3 7.3V11.2L7.4 13.5M12.5 3L8.4 7.3V12.7" fill="none" stroke="#555" stroke-width="1" stroke-linejoin="round"/></svg>
<div class="fi" style="left:439px;top:282px;width:193px;height:28px"></div>
<div class="a" style="left:607px;top:283px;width:1px;height:26px;background:#d4d4d4;"></div>
<svg class="a" style="left:613.6px;top:289px;width:15px;height:15px" viewBox="0 0 15 15" ><path d="M1 1.1H12" fill="none" stroke="#9a9a9a" stroke-width="1.3"/><path d="M0.2 3.2L4.3 7.3V11.2L7.4 13.5M12.5 3L8.4 7.3V12.7" fill="none" stroke="#555" stroke-width="1" stroke-linejoin="round"/></svg>
<div class="fi" style="left:680px;top:282px;width:165px;height:28px"></div>
<div class="a" style="left:820px;top:283px;width:1px;height:26px;background:#d4d4d4;"></div>
<svg class="a" style="left:826.6px;top:289px;width:15px;height:15px" viewBox="0 0 15 15" ><path d="M1 1.1H12" fill="none" stroke="#9a9a9a" stroke-width="1.3"/><path d="M0.2 3.2L4.3 7.3V11.2L7.4 13.5M12.5 3L8.4 7.3V12.7" fill="none" stroke="#555" stroke-width="1" stroke-linejoin="round"/></svg>
<div class="fi" style="left:852px;top:282px;width:143px;height:28px"></div>
<div class="a" style="left:970px;top:283px;width:1px;height:26px;background:#d4d4d4;"></div>
<svg class="a" style="left:976.6px;top:289px;width:15px;height:15px" viewBox="0 0 15 15" ><path d="M1 1.1H12" fill="none" stroke="#9a9a9a" stroke-width="1.3"/><path d="M0.2 3.2L4.3 7.3V11.2L7.4 13.5M12.5 3L8.4 7.3V12.7" fill="none" stroke="#555" stroke-width="1" stroke-linejoin="round"/></svg>
<div class="fi" style="left:1002px;top:282px;width:143px;height:28px"></div>
<div class="a" style="left:1120px;top:283px;width:1px;height:26px;background:#d4d4d4;"></div>
<svg class="a" style="left:1126.6px;top:289px;width:15px;height:15px" viewBox="0 0 15 15" ><path d="M1 1.1H12" fill="none" stroke="#9a9a9a" stroke-width="1.3"/><path d="M0.2 3.2L4.3 7.3V11.2L7.4 13.5M12.5 3L8.4 7.3V12.7" fill="none" stroke="#555" stroke-width="1" stroke-linejoin="round"/></svg>
<div class="fi" style="left:1152px;top:282px;width:93px;height:28px"></div>
<svg class="a" style="left:1204.8px;top:292.2px;width:7.3px;height:4.6px" viewBox="0 0 7.3 4.6" ><path d="M0.9 0.3H6.4Q7.3 0.3 6.7 1L4.2 3.9Q3.65 4.5 3.1 3.9L0.6 1Q0 0.3 0.9 0.3Z" fill="#111"/></svg>
<svg class="a" style="left:1225px;top:289px;width:15px;height:15px" viewBox="0 0 15 15" ><path d="M1 1.1H12" fill="none" stroke="#9a9a9a" stroke-width="1.3"/><path d="M0.2 3.2L4.3 7.3V11.2L7.4 13.5M12.5 3L8.4 7.3V12.7" fill="none" stroke="#555" stroke-width="1" stroke-linejoin="round"/></svg>
<div class="fi" style="left:1252px;top:282px;width:133px;height:28px"></div>
<div class="a" style="left:1360px;top:283px;width:1px;height:26px;background:#d4d4d4;"></div>
<svg class="a" style="left:1366.6px;top:289px;width:15px;height:15px" viewBox="0 0 15 15" ><path d="M1 1.1H12" fill="none" stroke="#9a9a9a" stroke-width="1.3"/><path d="M0.2 3.2L4.3 7.3V11.2L7.4 13.5M12.5 3L8.4 7.3V12.7" fill="none" stroke="#555" stroke-width="1" stroke-linejoin="round"/></svg>
<div class="fi" style="left:1392px;top:282px;width:113px;height:28px"></div>
<svg class="a" style="left:1490px;top:292.7px;width:7.3px;height:4.6px" viewBox="0 0 7.3 4.6" ><path d="M0.9 0.3H6.4Q7.3 0.3 6.7 1L4.2 3.9Q3.65 4.5 3.1 3.9L0.6 1Q0 0.3 0.9 0.3Z" fill="#111"/></svg>
<div class="fi" style="left:1512px;top:282px;width:113px;height:28px"></div>
<svg class="a" style="left:1610px;top:292.7px;width:7.3px;height:4.6px" viewBox="0 0 7.3 4.6" ><path d="M0.9 0.3H6.4Q7.3 0.3 6.7 1L4.2 3.9Q3.65 4.5 3.1 3.9L0.6 1Q0 0.3 0.9 0.3Z" fill="#111"/></svg>
<div class="fi" style="left:1632px;top:282px;width:113px;height:28px"></div>
<div class="a" style="left:1662px;top:283px;width:1px;height:26px;background:#d4d4d4;"></div>
<div class="x " id="eq" style="left:1645.00px;top:288px;transform:scaleX(1.0000);font-size:11px;line-height:16px;color:#444">=</div>
<div class="fi" style="left:1752px;top:282px;width:108px;height:28px"></div>
<div class="a" style="left:253px;top:313px;width:1636px;height:35px;background:#e8ebfd;"></div>
<div class="x tb" id="r0c0" style="left:263.00px;top:322px;transform:scaleX(1.0000);">1</div>
<div class="x tb" id="r0c1" style="left:333.00px;top:322px;transform:scaleX(1.0249);">0201</div>
<div class="x tb" id="r0c2" style="left:445.00px;top:322px;transform:scaleX(0.9132);">Đường và các công trình phụ trợ gắn l…</div>
<div class="x tb" id="r0c6" style="left:1399.00px;top:322px;transform:scaleX(1.0000);">2</div>
<div class="x tb" id="r0c7" style="left:1519.00px;top:322px;transform:scaleX(1.0000);">2</div>
<div class="x tb" id="r0c8" style="right:184px;top:322px;transform-origin:100% 50%;transform:scaleX(1.0160)">0,00</div>
<div class="x tb" id="r1c0" style="left:263.00px;top:358px;transform:scaleX(0.9690);">1.1</div>
<div class="x tb" id="r1c1" style="left:333.00px;top:358px;transform:scaleX(1.0190);">020101</div>
<div class="x tb" id="r1c2" style="left:445.00px;top:358px;transform:scaleX(0.9130);">Đường và các công trình phụ trợ gắn …</div>
<div class="x tb" id="r1c6" style="left:1399.00px;top:358px;transform:scaleX(1.0000);">2</div>
<div class="x tb" id="r1c7" style="left:1519.00px;top:358px;transform:scaleX(1.0000);">2</div>
<div class="x tb" id="r1c8" style="right:184px;top:358px;transform-origin:100% 50%;transform:scaleX(1.0171)">0,00</div>
<div class="x tb" id="r2c0" style="left:263.00px;top:393px;transform:scaleX(0.9980);">1.1.1</div>
<div class="x tb" id="r2c1" style="left:333.00px;top:393px;transform:scaleX(1.0298);">02010101</div>
<div class="x tb" id="r2c2" style="left:445.00px;top:393px;transform:scaleX(0.9173);">Đường cao tốc</div>
<div class="x tb" id="r2c5" style="left:1259.00px;top:393px;transform:scaleX(0.9456);">Tuyến/ Đoạn đường</div>
<div class="x tb" id="r2c6" style="left:1399.00px;top:393px;transform:scaleX(1.0000);">1</div>
<div class="x tb" id="r2c7" style="left:1519.00px;top:393px;transform:scaleX(1.0000);">1</div>
<div class="x tb" id="r2c8" style="right:184px;top:393px;transform-origin:100% 50%;transform:scaleX(1.0171)">0,00</div>
<div class="x tb" id="r2c9" style="left:1759.00px;top:393px;transform:scaleX(0.9727);">Km</div>
<div class="x td" id="r3c0" style="left:263.00px;top:428px;transform:scaleX(0.9737);">1.1.1.1</div>
<div class="x td" id="r3c1" style="left:333.00px;top:428px;transform:scaleX(0.9538);">TS001</div>
<div class="x td" id="r3c2" style="left:445.00px;top:428px;transform:scaleX(0.9806);">Đường cao tốc Hà Nội - Hải Phòng</div>
<div class="x td" id="r3c4" style="left:1159.00px;top:428px;transform:scaleX(1.0174);">2024</div>
<div class="x td" id="r3c5" style="left:1259.00px;top:428px;transform:scaleX(0.9921);">Tuyến/ Đoạn đường</div>
<div class="x td" id="r3c6" style="left:1399.00px;top:428px;transform:scaleX(1.0000);">1</div>
<div class="x td" id="r3c7" style="left:1519.00px;top:428px;transform:scaleX(1.0000);">1</div>
<div class="x td" id="r3c8" style="right:184px;top:428px;transform-origin:100% 50%;transform:scaleX(0.9877)">0,00</div>
<div class="x td" id="r3c9" style="left:1759.00px;top:428px;transform:scaleX(1.0429);">Km</div>
<div class="x tb" id="r4c0" style="left:263.00px;top:463px;transform:scaleX(1.0472);">1.1.2</div>
<div class="x tb" id="r4c1" style="left:333.00px;top:463px;transform:scaleX(1.0319);">02010102</div>
<div class="x tb" id="r4c2" style="left:445.00px;top:463px;transform:scaleX(0.9086);">Đường quốc lộ</div>
<div class="x tb" id="r4c5" style="left:1259.00px;top:463px;transform:scaleX(0.9456);">Tuyến/ Đoạn đường</div>
<div class="x tb" id="r4c9" style="left:1759.00px;top:463px;transform:scaleX(0.9727);">Km</div>
<div class="x tb" id="r5c0" style="left:263.00px;top:498px;transform:scaleX(1.0453);">1.1.3</div>
<div class="x tb" id="r5c1" style="left:333.00px;top:498px;transform:scaleX(1.0305);">02010103</div>
<div class="x tb" id="r5c2" style="left:445.00px;top:498px;transform:scaleX(0.9099);">Đường tỉnh</div>
<div class="x tb" id="r5c5" style="left:1259.00px;top:498px;transform:scaleX(0.9456);">Tuyến/ Đoạn đường</div>
<div class="x tb" id="r5c9" style="left:1759.00px;top:498px;transform:scaleX(0.9727);">Km</div>
<div class="x tb" id="r6c0" style="left:263.00px;top:533px;transform:scaleX(1.0435);">1.1.5</div>
<div class="x tb" id="r6c1" style="left:333.00px;top:533px;transform:scaleX(1.0290);">02010105</div>
<div class="x tb" id="r6c2" style="left:445.00px;top:533px;transform:scaleX(0.8895);">Đường xã</div>
<div class="x tb" id="r6c5" style="left:1259.00px;top:533px;transform:scaleX(0.9456);">Tuyến/ Đoạn đường</div>
<div class="x tb" id="r6c6" style="left:1399.00px;top:533px;transform:scaleX(1.0000);">1</div>
<div class="x tb" id="r6c7" style="left:1519.00px;top:533px;transform:scaleX(1.0000);">1</div>
<div class="x tb" id="r6c8" style="right:184px;top:533px;transform-origin:100% 50%;transform:scaleX(1.0171)">0,00</div>
<div class="x tb" id="r6c9" style="left:1759.00px;top:533px;transform:scaleX(0.9727);">Km</div>
<div class="x td" id="r7c0" style="left:263.00px;top:568px;transform:scaleX(0.9798);">1.1.5.1</div>
<div class="x td" id="r7c1" style="left:333.00px;top:568px;transform:scaleX(0.9619);">TSHT0001</div>
<div class="x td" id="r7c2" style="left:445.00px;top:568px;transform:scaleX(0.9401);">Đường xã</div>
<div class="x td" id="r7c3" style="left:687.00px;top:568px;transform:scaleX(1.0065);">T50662</div>
<div class="x td" id="r7c4" style="left:1159.00px;top:568px;transform:scaleX(1.0230);">2019</div>
<div class="x td" id="r7c5" style="left:1259.00px;top:568px;transform:scaleX(0.9921);">Tuyến/ Đoạn đường</div>
<div class="x td" id="r7c6" style="left:1399.00px;top:568px;transform:scaleX(1.0000);">1</div>
<div class="x td" id="r7c7" style="left:1519.00px;top:568px;transform:scaleX(1.0000);">1</div>
<div class="x td" id="r7c8" style="right:184px;top:568px;transform-origin:100% 50%;transform:scaleX(0.9877)">0,00</div>
<div class="x td" id="r7c9" style="left:1759.00px;top:568px;transform:scaleX(1.0429);">Km</div>
<div class="x tb" id="r8c0" style="left:263.00px;top:603px;transform:scaleX(1.0464);">1.1.6</div>
<div class="x tb" id="r8c1" style="left:333.00px;top:603px;transform:scaleX(1.0328);">02010106</div>
<div class="x tb" id="r8c2" style="left:445.00px;top:603px;transform:scaleX(0.9228);">Đường đô thị</div>
<div class="x tb" id="r8c5" style="left:1259.00px;top:603px;transform:scaleX(0.9456);">Tuyến/ Đoạn đường</div>
<div class="x tb" id="r8c9" style="left:1759.00px;top:603px;transform:scaleX(0.9727);">Km</div>
<div class="x tb" id="r9c0" style="left:263.00px;top:638px;transform:scaleX(1.0458);">1.2</div>
<div class="x tb" id="r9c1" style="left:333.00px;top:638px;transform:scaleX(1.0428);">020102</div>
<div class="x tb" id="r9c2" style="left:445.00px;top:638px;transform:scaleX(0.9179);">Tài sản, thiết bị chuyên dùng phục vụ …</div>
<div class="x tb" id="r9c5" style="left:1259.00px;top:638px;transform:scaleX(0.9968);">Cái</div>
<div class="x tb" id="r10c0" style="left:263.00px;top:673px;transform:scaleX(1.0002);">1.2.1</div>
<div class="x tb" id="r10c1" style="left:333.00px;top:673px;transform:scaleX(1.0156);">02010201</div>
<div class="x tb" id="r10c2" style="left:445.00px;top:673px;transform:scaleX(0.9321);">Hệ thống khảo sát tình trạng mặt đườ…</div>
<div class="x tb" id="r10c5" style="left:1259.00px;top:673px;transform:scaleX(0.9700);">Hệ thống</div>
<div class="x tb" id="r11c0" style="left:263.00px;top:708px;transform:scaleX(1.0472);">1.2.2</div>
<div class="x tb" id="r11c1" style="left:333.00px;top:708px;transform:scaleX(1.0319);">02010202</div>
<div class="x tb" id="r11c2" style="left:445.00px;top:708px;transform:scaleX(0.9194);">Hệ thống hồ sơ số hóa</div>
<div class="x tb" id="r11c5" style="left:1259.00px;top:708px;transform:scaleX(0.9700);">Hệ thống</div>
<div class="x tb" id="r12c0" style="left:263.00px;top:743px;transform:scaleX(1.0000);">2</div>
<div class="x tb" id="r12c1" style="left:333.00px;top:743px;transform:scaleX(1.0513);">0202</div>
<div class="x tb" id="r12c2" style="left:445.00px;top:743px;transform:scaleX(0.9173);">Cầu đường bộ và các công trình phụ t…</div>
<div class="x tb" id="r12c6" style="left:1399.00px;top:743px;transform:scaleX(1.0000);">1</div>
<div class="x tb" id="r12c7" style="left:1519.00px;top:743px;transform:scaleX(1.0000);">1</div>
<div class="x tb" id="r12c8" style="right:184px;top:743px;transform-origin:100% 50%;transform:scaleX(1.0171)">0,00</div>
<div class="x tb" id="r13c0" style="left:263.00px;top:778px;transform:scaleX(0.9560);">2.1</div>
<div class="x tb" id="r13c1" style="left:333.00px;top:778px;transform:scaleX(1.0145);">020201</div>
<div class="x tb" id="r13c2" style="left:445.00px;top:778px;transform:scaleX(0.9173);">Cầu đường bộ và các công trình phụ t…</div>
<div class="x tb" id="r13c5" style="left:1259.00px;top:778px;transform:scaleX(0.9968);">Cái</div>
<div class="x tb" id="r13c6" style="left:1399.00px;top:778px;transform:scaleX(1.0000);">1</div>
<div class="x tb" id="r13c7" style="left:1519.00px;top:778px;transform:scaleX(1.0000);">1</div>
<div class="x tb" id="r13c8" style="right:184px;top:778px;transform-origin:100% 50%;transform:scaleX(1.0171)">0,00</div>
<div class="x tb" id="r13c9" style="left:1759.00px;top:778px;transform:scaleX(1.0495);">m2</div>
<div class="x td" id="r14c0" style="left:263.00px;top:813px;transform:scaleX(0.9481);">2.1.1</div>
<div class="x td" id="r14c1" style="left:333.00px;top:813px;transform:scaleX(0.9836);">TSHT0002</div>
<div class="x td" id="r14c2" style="left:445.00px;top:813px;transform:scaleX(0.9773);">Cầu dân sinh</div>
<div class="x td" id="r14c3" style="left:687.00px;top:813px;transform:scaleX(1.0065);">T50662</div>
<div class="x td" id="r14c4" style="left:1159.00px;top:813px;transform:scaleX(1.0249);">2018</div>
<div class="x td" id="r14c5" style="left:1259.00px;top:813px;transform:scaleX(1.0128);">Cái</div>
<div class="x td" id="r14c6" style="left:1399.00px;top:813px;transform:scaleX(1.0000);">1</div>
<div class="x td" id="r14c7" style="left:1519.00px;top:813px;transform:scaleX(1.0000);">1</div>
<div class="x td" id="r14c8" style="right:184px;top:813px;transform-origin:100% 50%;transform:scaleX(0.9877)">0,00</div>
<div class="x td" id="r14c9" style="left:1759.00px;top:813px;transform:scaleX(1.0547);">m2</div>
<div class="a" style="left:253px;top:348px;width:1636px;height:1px;background:#e6e6e6;"></div>
<div class="a" style="left:253px;top:383px;width:1636px;height:1px;background:#e6e6e6;"></div>
<div class="a" style="left:253px;top:418px;width:1636px;height:1px;background:#e6e6e6;"></div>
<div class="a" style="left:253px;top:453px;width:1636px;height:1px;background:#e6e6e6;"></div>
<div class="a" style="left:253px;top:488px;width:1636px;height:1px;background:#e6e6e6;"></div>
<div class="a" style="left:253px;top:523px;width:1636px;height:1px;background:#e6e6e6;"></div>
<div class="a" style="left:253px;top:558px;width:1636px;height:1px;background:#e6e6e6;"></div>
<div class="a" style="left:253px;top:593px;width:1636px;height:1px;background:#e6e6e6;"></div>
<div class="a" style="left:253px;top:628px;width:1636px;height:1px;background:#e6e6e6;"></div>
<div class="a" style="left:253px;top:663px;width:1636px;height:1px;background:#e6e6e6;"></div>
<div class="a" style="left:253px;top:698px;width:1636px;height:1px;background:#e6e6e6;"></div>
<div class="a" style="left:253px;top:733px;width:1636px;height:1px;background:#e6e6e6;"></div>
<div class="a" style="left:253px;top:768px;width:1636px;height:1px;background:#e6e6e6;"></div>
<div class="a" style="left:253px;top:803px;width:1636px;height:1px;background:#e6e6e6;"></div>
<div class="a" style="left:253px;top:838px;width:1636px;height:1px;background:#e6e6e6;"></div>
<div class="a" style="left:322px;top:313px;width:1px;height:532px;background:#e6e6e6;"></div>
<div class="a" style="left:434px;top:313px;width:1px;height:532px;background:#e6e6e6;"></div>
<div class="a" style="left:676px;top:313px;width:1px;height:532px;background:#e6e6e6;"></div>
<div class="a" style="left:848px;top:313px;width:1px;height:532px;background:#e6e6e6;"></div>
<div class="a" style="left:998px;top:313px;width:1px;height:532px;background:#e6e6e6;"></div>
<div class="a" style="left:1148px;top:313px;width:1px;height:532px;background:#e6e6e6;"></div>
<div class="a" style="left:1248px;top:313px;width:1px;height:532px;background:#e6e6e6;"></div>
<div class="a" style="left:1388px;top:313px;width:1px;height:532px;background:#e6e6e6;"></div>
<div class="a" style="left:1508px;top:313px;width:1px;height:532px;background:#e6e6e6;"></div>
<div class="a" style="left:1628px;top:313px;width:1px;height:532px;background:#e6e6e6;"></div>
<div class="a" style="left:1748px;top:313px;width:1px;height:532px;background:#e6e6e6;"></div>
<div class="a" style="left:1800px;top:206px;width:89px;height:107px;background:#f5f5f5;"></div>
<div class="a" style="left:1800px;top:313px;width:82px;height:532px;background:#fff;"></div>
<div class="a" style="left:1800px;top:313px;width:82px;height:35px;background:#e8ebfd;"></div>
<div class="a" style="left:1800px;top:206px;width:1px;height:639px;background:#e0e0e0;"></div>
<div class="a" style="left:1800px;top:276px;width:89px;height:1px;background:#e0e0e0;"></div>
<div class="a" style="left:1800px;top:348px;width:82px;height:1px;background:#e6e6e6;"></div>
<div class="a" style="left:1800px;top:383px;width:82px;height:1px;background:#e6e6e6;"></div>
<div class="a" style="left:1800px;top:418px;width:82px;height:1px;background:#e6e6e6;"></div>
<div class="a" style="left:1800px;top:453px;width:82px;height:1px;background:#e6e6e6;"></div>
<div class="a" style="left:1800px;top:488px;width:82px;height:1px;background:#e6e6e6;"></div>
<div class="a" style="left:1800px;top:523px;width:82px;height:1px;background:#e6e6e6;"></div>
<div class="a" style="left:1800px;top:558px;width:82px;height:1px;background:#e6e6e6;"></div>
<div class="a" style="left:1800px;top:593px;width:82px;height:1px;background:#e6e6e6;"></div>
<div class="a" style="left:1800px;top:628px;width:82px;height:1px;background:#e6e6e6;"></div>
<div class="a" style="left:1800px;top:663px;width:82px;height:1px;background:#e6e6e6;"></div>
<div class="a" style="left:1800px;top:698px;width:82px;height:1px;background:#e6e6e6;"></div>
<div class="a" style="left:1800px;top:733px;width:82px;height:1px;background:#e6e6e6;"></div>
<div class="a" style="left:1800px;top:768px;width:82px;height:1px;background:#e6e6e6;"></div>
<div class="a" style="left:1800px;top:803px;width:82px;height:1px;background:#e6e6e6;"></div>
<div class="a" style="left:1800px;top:838px;width:82px;height:1px;background:#e6e6e6;"></div>
<div class="x th" id="th_cn" style="left:1810.55px;top:233px;transform:scaleX(0.9237);">Chức năng</div>
<svg class="a" style="left:1816.8px;top:430.8px;width:14px;height:14px" viewBox="0 0 14 14" overflow="visible"><path d="M10.8 0.6L13.1 2.9L6.1 9.6L3.4 10L3.9 7.3Z" fill="none" stroke="#2b50ed" stroke-width="1.1" stroke-linejoin="round"/><path d="M2.8 5.8C1.2 6.2 0.6 7 0.6 8.4V10.4C0.6 11.8 1.4 12.7 2.8 12.7H10.4C11.8 12.7 12.7 11.8 12.7 10.4V8.2C12.7 7.2 12.3 6.6 11.6 6.2" fill="none" stroke="#2b50ed" stroke-width="1.2" stroke-linecap="round"/></svg>
<svg class="a" style="left:1848.1px;top:429px;width:14px;height:15px" viewBox="0 0 14 15" ><g fill="none" stroke="#e0452f" stroke-linecap="round"><path d="M0.5 4.5H13.5" stroke-width="1.1"/><path d="M3.6 4.2C3.8 2.8 4.4 2.4 5.4 2.4H8.6C9.6 2.4 10.2 2.8 10.4 4.2M5.8 0.8C6.4 0.4 7.6 0.4 8.2 0.8" stroke-width="0.9" opacity="0.8"/><path d="M1.9 4.8L2.6 12.4C2.7 13.6 3.2 14.2 4.4 14.2H9.6C10.8 14.2 11.3 13.6 11.4 12.4L12.1 4.8" stroke-width="0.9" opacity="0.8"/><path d="M5.4 6.4V10.8M8.4 6.4V10.8" stroke-width="1.1"/></g></svg>
<svg class="a" style="left:1816.8px;top:570.8px;width:14px;height:14px" viewBox="0 0 14 14" overflow="visible"><path d="M10.8 0.6L13.1 2.9L6.1 9.6L3.4 10L3.9 7.3Z" fill="none" stroke="#2b50ed" stroke-width="1.1" stroke-linejoin="round"/><path d="M2.8 5.8C1.2 6.2 0.6 7 0.6 8.4V10.4C0.6 11.8 1.4 12.7 2.8 12.7H10.4C11.8 12.7 12.7 11.8 12.7 10.4V8.2C12.7 7.2 12.3 6.6 11.6 6.2" fill="none" stroke="#2b50ed" stroke-width="1.2" stroke-linecap="round"/></svg>
<svg class="a" style="left:1848.1px;top:569px;width:14px;height:15px" viewBox="0 0 14 15" ><g fill="none" stroke="#e0452f" stroke-linecap="round"><path d="M0.5 4.5H13.5" stroke-width="1.1"/><path d="M3.6 4.2C3.8 2.8 4.4 2.4 5.4 2.4H8.6C9.6 2.4 10.2 2.8 10.4 4.2M5.8 0.8C6.4 0.4 7.6 0.4 8.2 0.8" stroke-width="0.9" opacity="0.8"/><path d="M1.9 4.8L2.6 12.4C2.7 13.6 3.2 14.2 4.4 14.2H9.6C10.8 14.2 11.3 13.6 11.4 12.4L12.1 4.8" stroke-width="0.9" opacity="0.8"/><path d="M5.4 6.4V10.8M8.4 6.4V10.8" stroke-width="1.1"/></g></svg>
<svg class="a" style="left:1816.8px;top:815.8px;width:14px;height:14px" viewBox="0 0 14 14" overflow="visible"><path d="M10.8 0.6L13.1 2.9L6.1 9.6L3.4 10L3.9 7.3Z" fill="none" stroke="#2b50ed" stroke-width="1.1" stroke-linejoin="round"/><path d="M2.8 5.8C1.2 6.2 0.6 7 0.6 8.4V10.4C0.6 11.8 1.4 12.7 2.8 12.7H10.4C11.8 12.7 12.7 11.8 12.7 10.4V8.2C12.7 7.2 12.3 6.6 11.6 6.2" fill="none" stroke="#2b50ed" stroke-width="1.2" stroke-linecap="round"/></svg>
<svg class="a" style="left:1848.1px;top:814px;width:14px;height:15px" viewBox="0 0 14 15" ><g fill="none" stroke="#e0452f" stroke-linecap="round"><path d="M0.5 4.5H13.5" stroke-width="1.1"/><path d="M3.6 4.2C3.8 2.8 4.4 2.4 5.4 2.4H8.6C9.6 2.4 10.2 2.8 10.4 4.2M5.8 0.8C6.4 0.4 7.6 0.4 8.2 0.8" stroke-width="0.9" opacity="0.8"/><path d="M1.9 4.8L2.6 12.4C2.7 13.6 3.2 14.2 4.4 14.2H9.6C10.8 14.2 11.3 13.6 11.4 12.4L12.1 4.8" stroke-width="0.9" opacity="0.8"/><path d="M5.4 6.4V10.8M8.4 6.4V10.8" stroke-width="1.1"/></g></svg>
<div class="a" style="left:1882px;top:313px;width:7px;height:532px;background:#f0f0f0;"></div>
<div class="a" style="left:1882px;top:313px;width:7px;height:150px;background:#c8c8c8;"></div>
<div class="a" style="left:253px;top:845px;width:1636px;height:7px;background:#f0f0f0;"></div>
<div class="a" style="left:253px;top:845px;width:793px;height:7px;background:#d6d6d6;"></div>
<div class="a" style="left:253px;top:852px;width:1636px;height:1px;background:#e8e8e8;"></div>
<div class="x " id="foot" style="left:262.52px;top:863px;transform:scaleX(0.9924);font-size:13px;line-height:18px;color:#1f2229">Tổng số: <b>4</b> bản ghi</div>
</main>
<div id="ov"><!-- floating widget panel -->
<div class="a" style="left:1865px;top:352px;width:56px;height:198px;background:#fff;border-radius:10px 4px 4px 10px;box-shadow:0 0 5px rgba(0,0,0,0.10)"></div>
<div class="a" style="left:1905px;top:332px;width:16px;height:16px;background:#2b50ed;border-radius:2px 0 0 2px"></div>
<svg class="a" style="left:1908px;top:335px;width:10px;height:10px" viewBox="0 0 10 10"><path d="M3.4 1.8L6.8 5L3.4 8.2" fill="none" stroke="#fff" stroke-width="1.4"/></svg>
<svg class="a" style="left:1873px;top:360px;width:40px;height:40px" viewBox="0 0 40 40"><circle cx="20" cy="20" r="20" fill="#2f54eb"/>
<g transform="translate(20 21) rotate(-45)" fill="#fff"><rect x="4.2" y="-6.9" width="1.6" height="11.1" rx="0.8"/><path d="M3.6 -5.2V2.5L-1.1 0.3V-4.05Z"/><rect x="-6.6" y="-4.05" width="5" height="4.35" rx="1.6"/><path d="M-2.5 1.8L-3.1 4.5" stroke="#fff" stroke-width="2.6" stroke-linecap="round"/>
<path d="M6.9 -4.6L7.9 -5.4M7.2 -1.4H8.8M6.9 1.8L7.9 2.6" stroke="#fff" stroke-width="0.9" stroke-linecap="round" opacity="0.75"/></g></svg>
<svg class="a" style="left:1873px;top:408px;width:40px;height:40px" viewBox="0 0 40 40"><defs><linearGradient id="gg" x1="0" y1="0" x2="0" y2="1"><stop offset="0" stop-color="#10cc74"/><stop offset="1" stop-color="#1b9a62"/></linearGradient></defs><circle cx="20" cy="20" r="20" fill="url(#gg)"/>
<path d="M7 20C9 11 31 11 33 20C31 29 9 29 7 20Z" fill="#fff" transform="rotate(0 20 20)"/><ellipse cx="20" cy="20" rx="12.4" ry="11.4" fill="#fff"/>
<circle cx="20" cy="20" r="7.6" fill="#16b36b"/><path d="M23 26L28 27.6L25.6 23Z" fill="#16b36b"/>
<circle cx="17.2" cy="19.8" r="1.6" fill="#fff"/><circle cx="22.8" cy="19.8" r="1.6" fill="#fff"/></svg>
<svg class="a" style="left:1873px;top:456px;width:40px;height:40px" viewBox="0 0 40 40"><circle cx="20" cy="20" r="20" fill="#1a40d8"/>
<circle cx="9.8" cy="12.8" r="4.6" fill="#cfe3ff"/><circle cx="30.2" cy="12.8" r="4.6" fill="#cfe3ff"/>
<rect x="6.8" y="9.4" width="26.4" height="22.8" rx="10.5" fill="#f4f8ff"/>
<rect x="9.6" y="15.8" width="20.8" height="12.6" rx="6.3" fill="#0a1a6e"/>
<circle cx="14.8" cy="21.6" r="2.9" fill="#aeb6c8"/><circle cx="25.2" cy="21.6" r="2.9" fill="#aeb6c8"/><circle cx="14.8" cy="21.6" r="1.3" fill="#4a5068"/><circle cx="25.2" cy="21.6" r="1.3" fill="#4a5068"/>
<path d="M18.4 26C19.4 27.2 20.6 27.2 21.6 26" stroke="#9fb0e8" stroke-width="1" fill="none"/></svg>
<svg class="a" style="left:1870px;top:501px;width:44px;height:44px" viewBox="0 0 44 44"><circle cx="23" cy="23" r="20" fill="#2f54eb"/><circle cx="7" cy="7" r="6.1" fill="#fba40f"/>
<g fill="#fff"><circle cx="15.8" cy="17.4" r="2.5"/><circle cx="30.2" cy="17.4" r="2.5"/><path d="M11.6 25.4C11.6 22.6 13.4 21 15.8 21C17.2 21 18.2 21.4 18.8 22.2C17.4 23.4 16.8 25 16.8 27.6H13C12.2 27.6 11.6 27 11.6 25.4Z"/><path d="M34.4 25.4C34.4 22.6 32.6 21 30.2 21C28.8 21 27.8 21.4 27.2 22.2C28.6 23.4 29.2 25 29.2 27.6H33C33.800000000000004 27.6 34.4 27 34.4 25.4Z"/>
<circle cx="23" cy="17.6" r="3.5"/><path d="M17.4 28.6C17.4 24.8 19.6 22.6 23 22.6C26.4 22.6 28.6 24.8 28.6 28.6C28.6 30.4 27.8 31 26.6 31H19.4C18.2 31 17.4 30.4 17.4 28.6Z"/></g></svg>
<!-- annotations -->
<div class="a" style="left:10px;top:554px;width:206px;height:40px;border:4px solid #f04045"></div>
<div class="a" style="left:201px;top:568px;width:40px;height:40px;border-radius:50%;background:#f74046;box-shadow:2px 3px 5px rgba(0,0,0,0.35)"></div>
<div class="a" style="left:202px;top:568px;width:40px;height:40px;line-height:40px;text-align:center;color:#fff;font-size:29px;clip-path:polygon(0 0,40px 0,40px 26.8px,22.2px 26.8px,22.2px 40px,18.6px 40px,18.6px 26.8px,0 26.8px)">1</div>
<div class="a" style="left:1795px;top:165px;width:55px;height:30px;border:4px solid #f04045"></div>
<div class="a" style="left:1830px;top:178px;width:40px;height:40px;border-radius:50%;background:#f74046;box-shadow:2px 3px 5px rgba(0,0,0,0.35)"></div>
<div class="a" style="left:1830px;top:178px;width:40px;height:40px;line-height:40px;text-align:center;color:#fff;font-size:29px">2</div>
<!-- right edge shadow -->
<div class="a" style="left:1907px;top:700px;width:14px;height:206px;background:linear-gradient(90deg,rgba(0,0,0,0) 0%,rgba(0,0,0,0.10) 45%,rgba(0,0,0,0.33) 100%);-webkit-mask-image:linear-gradient(180deg,transparent 0,#000 22%,#000 95%,transparent 100%);mask-image:linear-gradient(180deg,transparent 0,#000 22%,#000 95%,transparent 100%)"></div>
</div>
</body>
</html>
